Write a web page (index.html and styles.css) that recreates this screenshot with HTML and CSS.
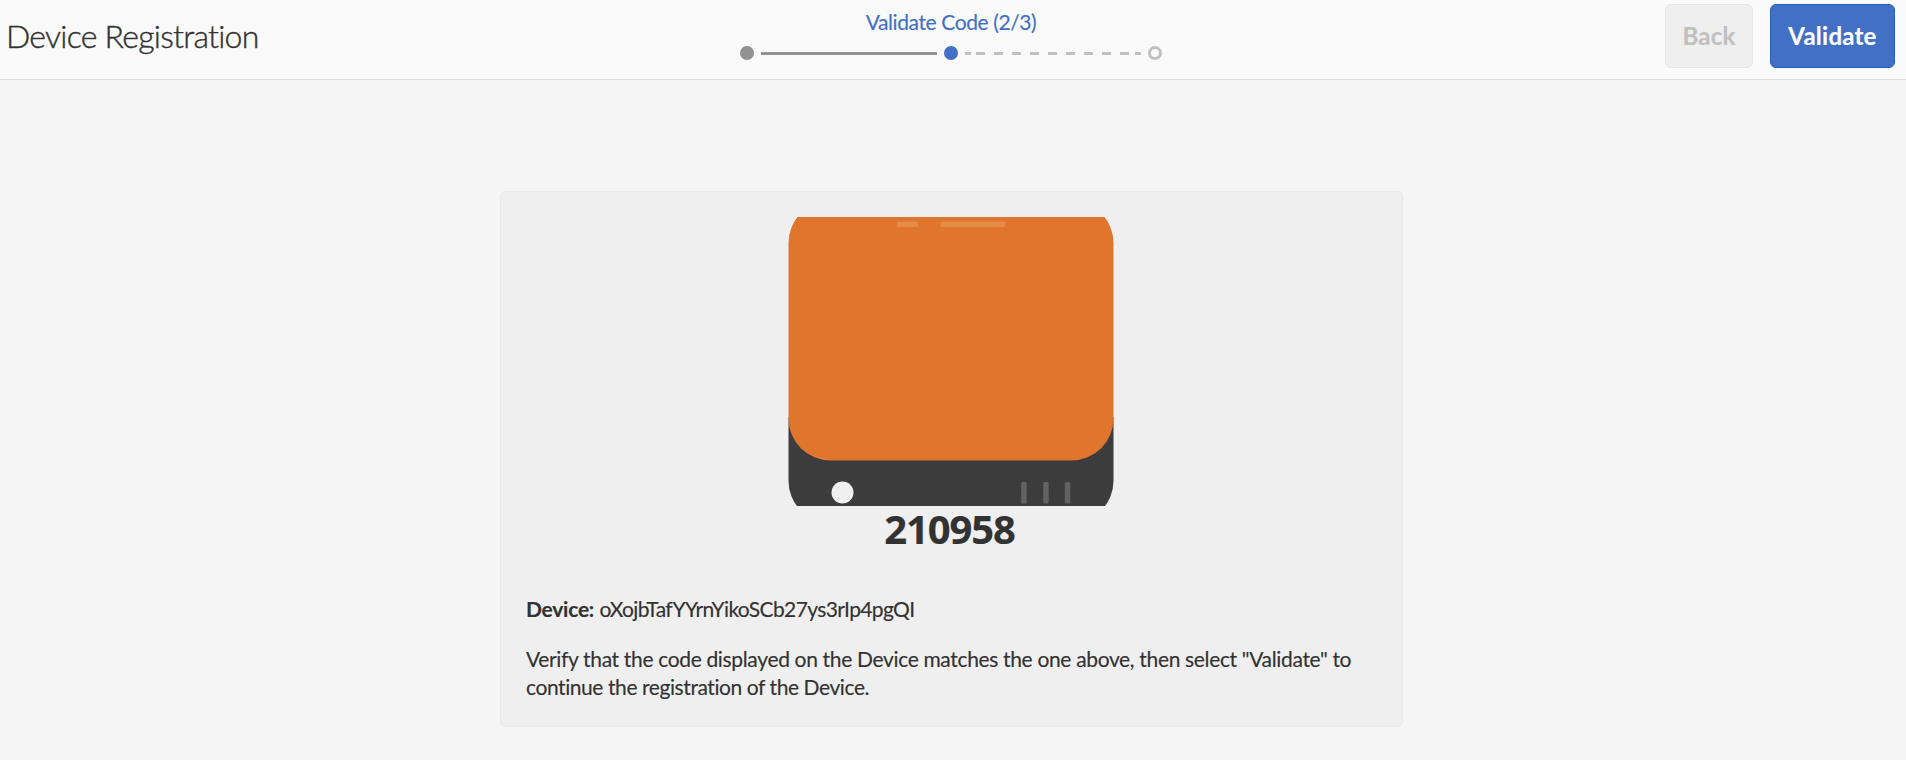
FILE: index.html
```html
<!DOCTYPE html>
<html lang="en">
<head>
<meta charset="utf-8">
<title>Device Registration</title>
<link rel="stylesheet" href="styles.css">
</head>
<body>
<header class="header">
  <h1 class="title">Device Registration</h1>
  <div class="wizard">
    <div class="step-label">Validate Code (2/3)</div>
    <div class="steps">
      <span class="dot done"></span>
      <span class="line"></span>
      <span class="dot current"></span>
      <svg class="dashes" viewBox="0 0 176 3"><path d="M0 1.5h6M11 1.5h9M29 1.5h9M47 1.5h9M65 1.5h9M83 1.5h9M101 1.5h9M119 1.5h9M137 1.5h9M155 1.5h9M170 1.5h6"/></svg>
      <span class="dot todo"></span>
    </div>
  </div>
  <div class="actions">
    <button class="btn back" disabled>Back</button>
    <button class="btn validate">Validate</button>
  </div>
</header>
<main class="card">
  <svg class="device" viewBox="0 0 331 289">
    <path d="M2.500 200H327.500V264a41 41 0 0 1-41 41H43.500a41 41 0 0 1-41-41z" fill="#3c3c3c"/>
    <rect x="2.500" y="-16" width="325" height="259.500" rx="42" fill="#e0752d"/>
    <rect x="111" y="4.500" width="21" height="5.500" rx="1.500" fill="#e48d48"/>
    <rect x="154.500" y="4.500" width="64.500" height="5.500" rx="1.500" fill="#e48d48"/>
    <circle cx="56.500" cy="275.500" r="11" fill="#f0f0f0"/>
    <g fill="#626262">
      <rect x="235.200" y="265" width="5.500" height="21.500" rx="1.500"/>
      <rect x="257.200" y="265" width="5.500" height="21.500" rx="1.500"/>
      <rect x="278.800" y="265" width="5.500" height="21.500" rx="1.500"/>
    </g>
  </svg>
  <div class="code">210958</div>
  <p class="info"><strong>Device:</strong> <span class="id">oXojbTafYYrnYikoSCb27ys3rIp4pgQI</span></p>
  <p class="help">Verify that the code displayed on the Device matches the one above, then select "Validate" to <span class="tail">continue the registration of the Device.</span></p>
</main>
</body>
</html>
```
FILE: styles.css
```css
* { box-sizing: border-box; }
body {
  margin: 0;
  background: #f5f5f5;
  color: #323232;
  font: 21px/28px Lato, "Open Sans", sans-serif;
  font-variant-ligatures: none;
  -webkit-text-stroke: 0.15px;
}
.header {
  display: grid;
  grid-template-columns: 1fr 422px 1fr;
  height: 80px;
  padding: 4px 11px 11px 7px;
  background: #fafafa;
  border-bottom: 1px solid #e1e1e1;
}
.title {
  margin: 0 0 0 -1px;
  font-size: 32px;
  font-weight: 300;
  line-height: 64px;
  letter-spacing: -0.75px;
  -webkit-text-stroke: 0.4px;
}
.wizard { padding-top: 4px; }
.step-label {
  text-align: center;
  color: #3f70c6;
  letter-spacing: -0.4px;
}
.steps {
  display: flex;
  align-items: center;
  justify-content: space-between;
  margin-top: 10px;
}
.dot { width: 14px; height: 14px; border-radius: 50%; }
.done { background: #929292; }
.current { background: #4170c5; }
.todo { border: 3px solid #c0c0c0; }
.line { width: 176px; height: 3px; background: #929292; }
.dashes {
  width: 176px;
  height: 3px;
  fill: none;
  stroke: #bfbfbf;
  stroke-width: 3;
}
.actions { display: flex; justify-content: flex-end; gap: 17px; }
.btn {
  height: 64px;
  padding: 0;
  border: 1px solid;
  border-radius: 6px;
  font: 700 24px/62px Lato, sans-serif;
  letter-spacing: 0.25px;
}
.back {
  width: 88px;
  background: #efefef;
  border-color: #e6e6e6;
  color: #c0c0c0;
}
.validate {
  width: 125px;
  background: #4170c5;
  border-color: #2b5fbd;
  color: #fff;
}
.card {
  width: 903px;
  height: 536px;
  margin: 111px 0 0 500px;
  padding: 25px;
  background: #efefef;
  border: 1px solid #e8e8e8;
  border-radius: 6px;
}
.device {
  display: block;
  width: 331px;
  height: 289px;
  margin: 0 auto;
}
.code {
  padding-right: 4px;
  text-align: center;
  font: 700 40px/46px "Open Sans", sans-serif;
  letter-spacing: -1.1px;
}
.info { margin: 43px 0 22px; }
.info strong { letter-spacing: -0.25px; }
.id { letter-spacing: -0.63px; }
.help { margin: 0; letter-spacing: -0.34px; }
.tail { letter-spacing: -0.42px; }
```
